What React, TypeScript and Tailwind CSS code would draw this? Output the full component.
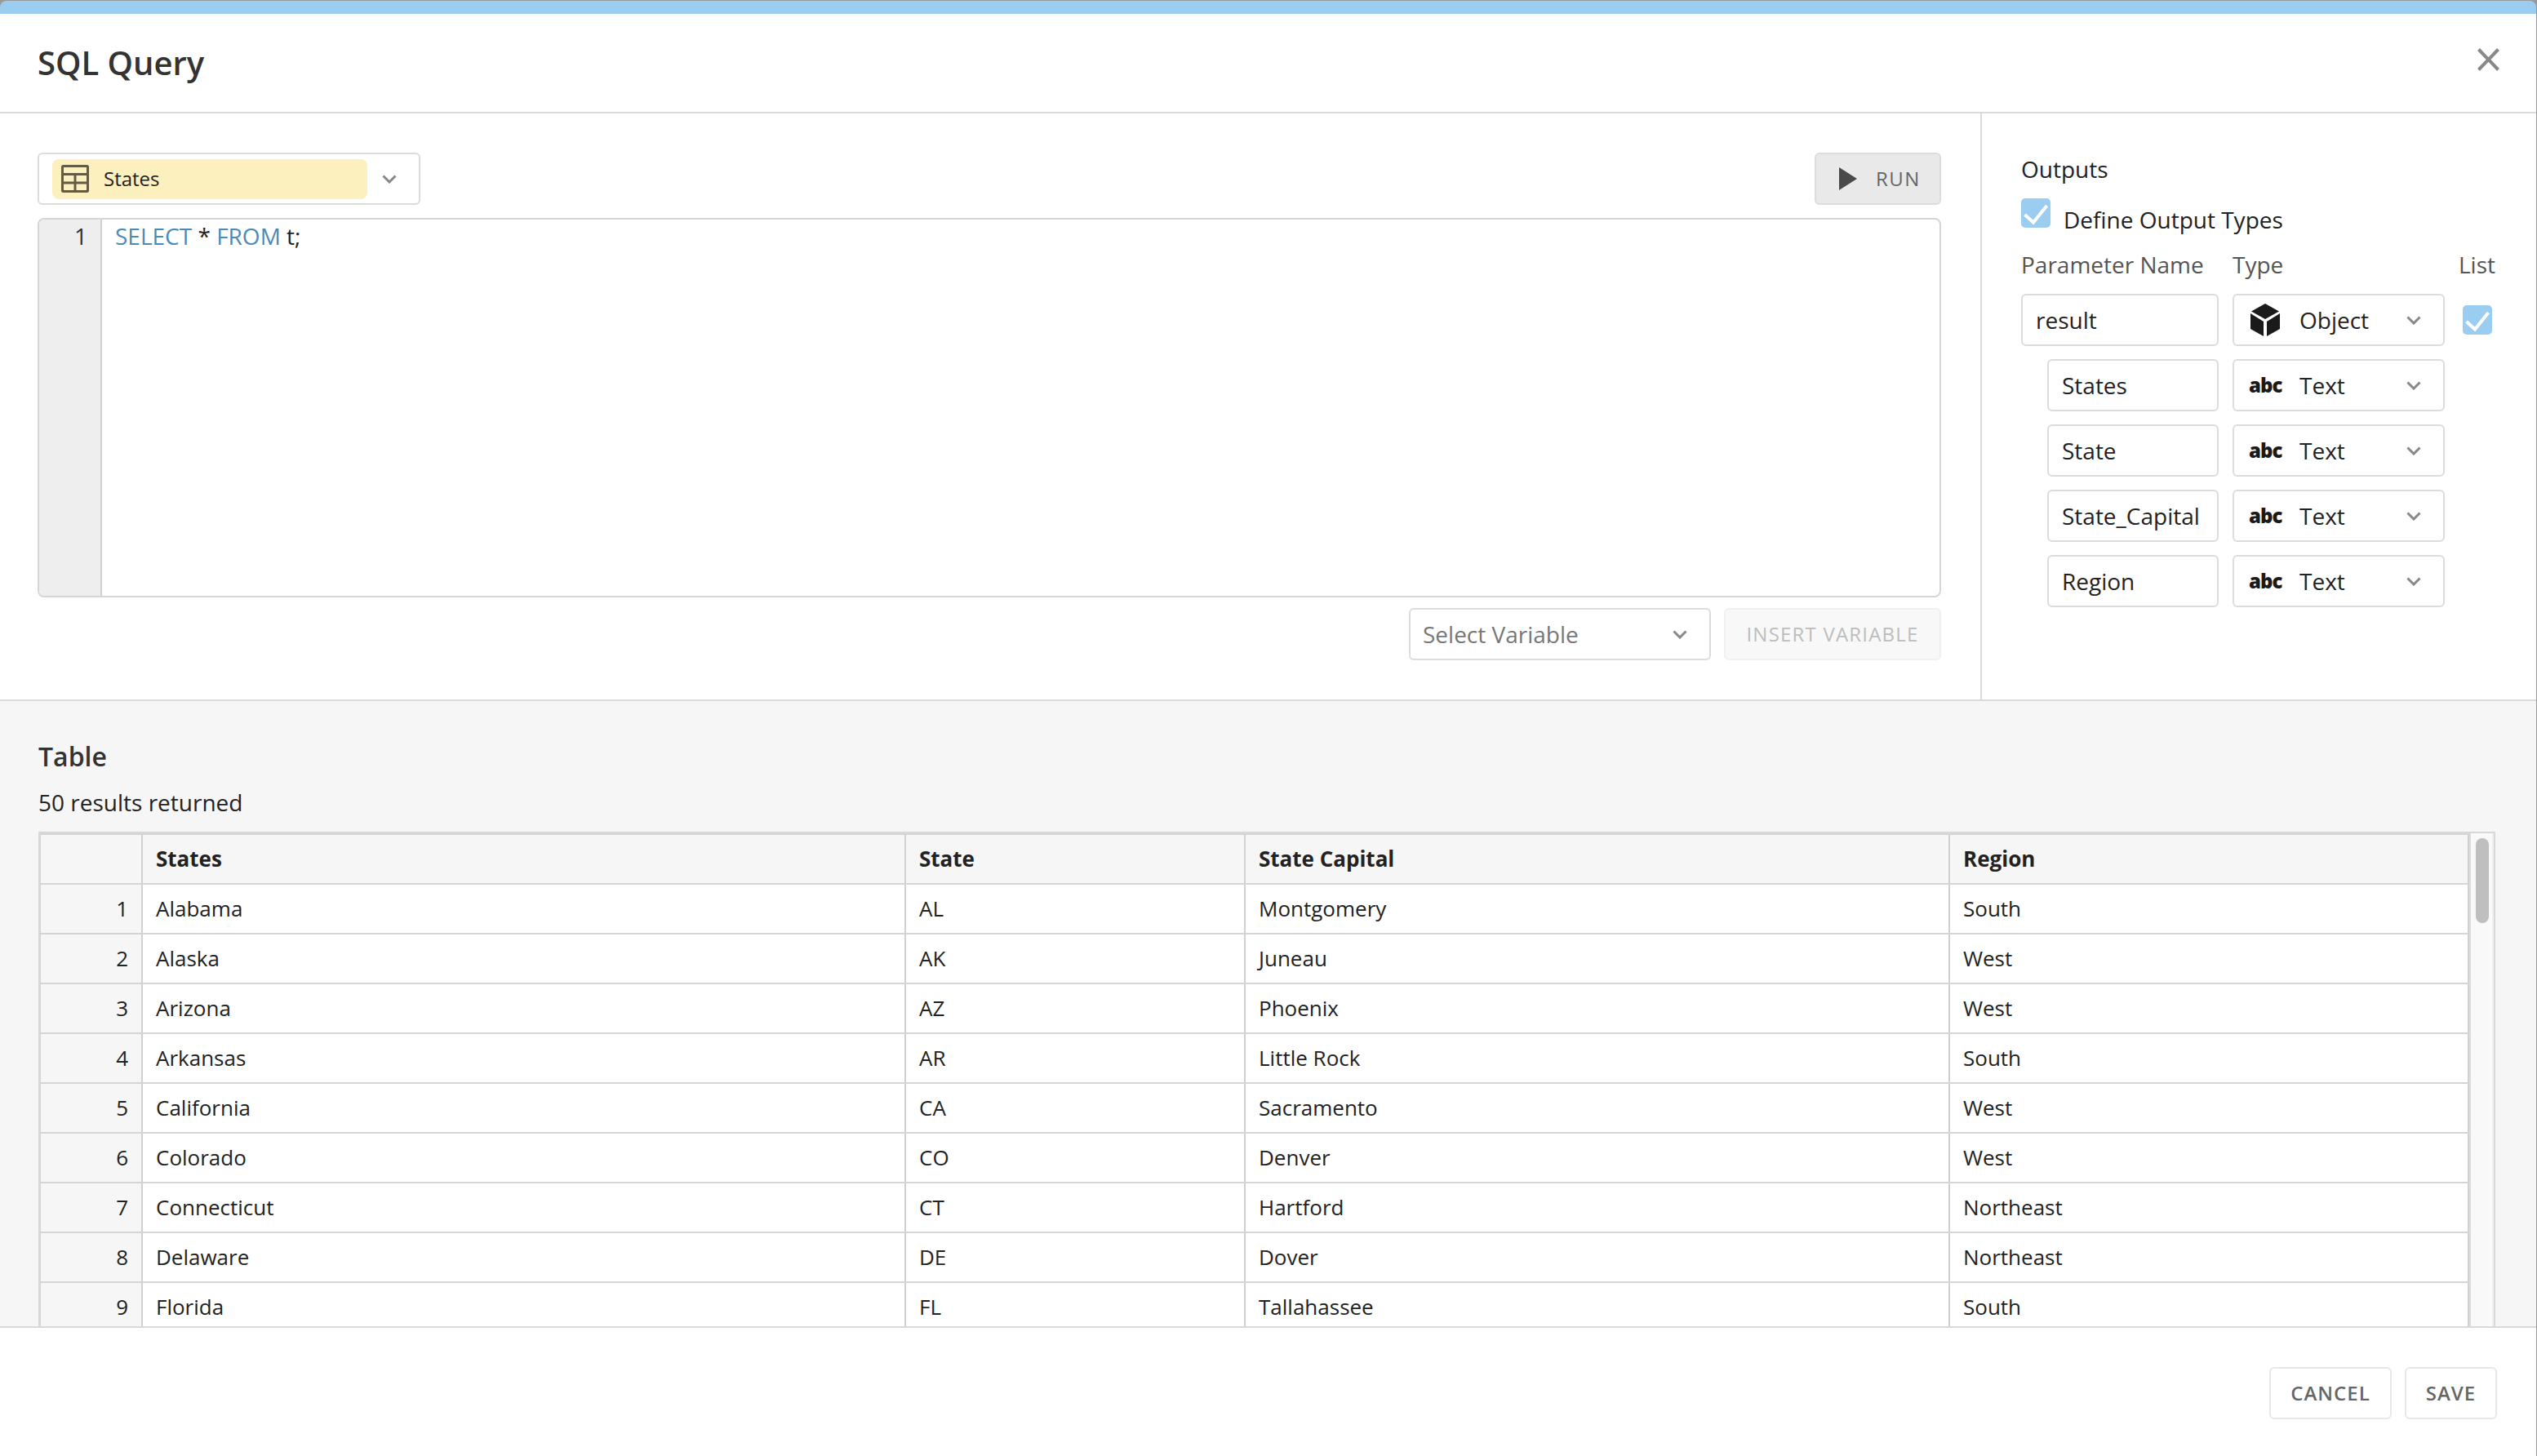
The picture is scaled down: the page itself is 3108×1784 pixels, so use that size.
const outputRows = [
  { name: 'States' },
  { name: 'State' },
  { name: 'State_Capital' },
  { name: 'Region' },
]

const tableRows = [
  ['1', 'Alabama', 'AL', 'Montgomery', 'South'],
  ['2', 'Alaska', 'AK', 'Juneau', 'West'],
  ['3', 'Arizona', 'AZ', 'Phoenix', 'West'],
  ['4', 'Arkansas', 'AR', 'Little Rock', 'South'],
  ['5', 'California', 'CA', 'Sacramento', 'West'],
  ['6', 'Colorado', 'CO', 'Denver', 'West'],
  ['7', 'Connecticut', 'CT', 'Hartford', 'Northeast'],
  ['8', 'Delaware', 'DE', 'Dover', 'Northeast'],
  ['9', 'Florida', 'FL', 'Tallahassee', 'South'],
]

// Small grey chevron used by every select
const Chevron = () => (
  <svg viewBox="0 0 18 11" className="h-[11px] w-[18px] shrink-0" fill="none" stroke="#888888" strokeWidth="3">
    <path d="M1.5 1.5 L9 9 L16.5 1.5" />
  </svg>
)

const TableIcon = () => (
  <svg viewBox="0 0 34 34" className="h-[34px] w-[34px] shrink-0" fill="none" stroke="#645b45" strokeWidth="3">
    <rect x="1.5" y="1.5" width="31" height="31" rx="1" />
    <path d="M1 11.5 H33 M1 22 H33 M17 11.5 V33" />
  </svg>
)

const CubeIcon = () => (
  <svg viewBox="0 0 36 40" className="h-[40px] w-[36px] shrink-0" fill="#1a1a1a">
    <path d="M18 0 L35 9.5 L18 19 L1 9.5 Z" />
    <path d="M0 12 L16 22 V40 L0 31 Z" />
    <path d="M36 12 L20 22 V40 L36 31 Z" />
  </svg>
)

const Checkbox = () => (
  <div className="flex h-[36px] w-[36px] shrink-0 items-center justify-center rounded-[5px] bg-[#9bcdf0]">
    <svg viewBox="0 0 36 36" className="h-[36px] w-[36px]" fill="none" stroke="#ffffff" strokeWidth="4">
      <path d="M4.5 20 L15 29.5 L31.5 9" />
    </svg>
  </div>
)

const TypeSelect = ({ label, icon }: { label: string; icon: 'object' | 'text' }) => (
  <div className="ml-[17px] flex h-[64px] w-[260px] shrink-0 items-center rounded-md border-2 border-[#dcdcdc] pr-[27px]">
    {icon === 'object' ? (
      <div className="ml-[20px] mr-[24px]">
        <CubeIcon />
      </div>
    ) : (
      <span className="ml-[18px] mr-[21px] w-[41px] text-[24px] leading-[36px] font-extrabold tracking-[-1px] text-[#1a1a1a]">abc</span>
    )}
    <span className="flex-1 text-[28px] text-[#222222]">{label}</span>
    <Chevron />
  </div>
)

const NameInput = ({ value, indented }: { value: string; indented?: boolean }) => (
  <input
    readOnly
    value={value}
    className={
      indented
        ? 'ml-[32px] h-[64px] w-[210px] shrink-0 rounded-md border-2 border-[#dcdcdc] pl-[16px] text-[28px] text-[#222222] outline-none'
        : 'h-[64px] w-[242px] shrink-0 rounded-md border-2 border-[#dcdcdc] pl-[16px] text-[28px] text-[#222222] outline-none'
    }
  />
)

const gridCols = 'grid grid-cols-[125px_935px_416px_863px_636px]'

export default function App() {
  return (
    <div className="flex h-[1784px] w-[3108px] flex-col overflow-hidden bg-[#999999] pt-px pr-px font-['Open_Sans',sans-serif] text-[#222222]">
      <div className="flex min-h-0 flex-1 flex-col overflow-hidden rounded-t-lg border-t-[16px] border-[#9bcdf0] bg-white">
        {/* Header */}
        <div className="flex h-[122px] shrink-0 items-center justify-between border-b-2 border-[#d9d9d9] pr-[45px] pl-[46px]">
          <h1 className="text-[40px] font-semibold text-[#333333]">SQL Query</h1>
          <svg viewBox="0 0 27 28" className="mb-[8px] h-[28px] w-[27px]" fill="none" stroke="#888888" strokeWidth="4">
            <path d="M1.5 1.5 L25.5 26.5 M25.5 1.5 L1.5 26.5" />
          </svg>
        </div>

        {/* Editor + outputs */}
        <div className="flex h-[720px] shrink-0 border-b-2 border-[#d9d9d9]">
          <div className="w-[2428px] shrink-0 border-r-2 border-[#d9d9d9] pt-[48px] pr-[48px] pl-[46px]">
            <div className="flex items-center justify-between">
              <div className="flex h-[64px] w-[469px] items-center rounded-md border-2 border-[#dcdcdc] pl-[16px]">
                <div className="flex h-[49px] w-[386px] items-center rounded-lg bg-[#fdf0bf] pl-[11px]">
                  <TableIcon />
                  <span className="ml-[18px] text-[24px] text-[#222222]">States</span>
                </div>
                <div className="ml-[18px]">
                  <Chevron />
                </div>
              </div>
              <button className="flex h-[64px] w-[155px] items-center rounded-md border-2 border-[#dcdcdc] bg-[#e9e9e9] pl-[28px]">
                <svg viewBox="0 0 22 28" className="h-[28px] w-[22px]" fill="#4a4a4a">
                  <path d="M0 0 L22 14 L0 28 Z" />
                </svg>
                <span className="ml-[23px] text-[24px] font-medium tracking-[1.5px] text-[#666666]">RUN</span>
              </button>
            </div>

            <div className="mt-[16px] flex h-[465px] overflow-hidden rounded-lg border-2 border-[#d5d5d5]">
              <div className="w-[77px] shrink-0 border-r-2 border-[#d0d0d0] bg-[#eeeeee] pt-[1px] pr-[16px] text-right text-[28px] leading-[38px] text-[#333333]">
                1
              </div>
              <div className="pt-[1px] pl-[16px] text-[28px] leading-[38px] text-[#222222]">
                <span className="text-[#4a8ab8]">SELECT</span> * <span className="text-[#4a8ab8]">FROM</span> t;
              </div>
            </div>

            <div className="mt-[13px] flex justify-end gap-[16px]">
              <div className="flex h-[64px] w-[370px] items-center justify-between rounded-md border-2 border-[#dcdcdc] pr-[27px] pl-[15px]">
                <span className="text-[28px] text-[#777777]">Select Variable</span>
                <Chevron />
              </div>
              <button className="h-[64px] w-[266px] rounded-md border-2 border-[#f0f0f0] bg-[#f8f8f8] text-[24px] font-medium tracking-[1.2px] text-[#bdbdbd]">
                INSERT VARIABLE
              </button>
            </div>
          </div>

          <div className="flex-1 pt-[49px] pl-[48px] text-[28px] leading-[38px]">
            <div>Outputs</div>
            <div className="mt-[17px] flex items-start">
              <Checkbox />
              <span className="mt-[7px] ml-[16px]">Define Output Types</span>
            </div>
            <div className="mt-[17px] flex text-[#555555]">
              <span className="w-[259px]">Parameter Name</span>
              <span className="w-[277px]">Type</span>
              <span>List</span>
            </div>
            <div className="mt-[17px] flex items-center">
              <NameInput value="result" />
              <TypeSelect label="Object" icon="object" />
              <div className="ml-[22px]">
                <Checkbox />
              </div>
            </div>
            {outputRows.map((row) => (
              <div key={row.name} className="mt-[16px] flex items-center">
                <NameInput value={row.name} indented />
                <TypeSelect label="Text" icon="text" />
              </div>
            ))}
          </div>
        </div>

        {/* Results table */}
        <div className="flex min-h-0 flex-1 flex-col border-b-2 border-[#d9d9d9] bg-[#f6f6f6] pt-[46px]">
          <h2 className="pl-[47px] text-[32px] leading-[44px] font-semibold text-[#333333]">Table</h2>
          <p className="mt-[15px] pl-[47px] text-[28px] leading-[38px] text-[#222222]">50 results returned</p>
          <div className="mt-[17px] ml-[47px] flex min-h-0 w-[3010px] flex-1 border-x-2 border-t-2 border-[#d8d8d8]">
            <div className="min-w-0 flex-1 overflow-hidden border-t-2 border-l border-[#d5d5d5] text-[26px] leading-[59px] text-[#222222]">
              <div className={`${gridCols} border-b-2 border-[#d5d5d5] font-bold`}>
                <div className="border-r-2 border-[#d0d0d0]" />
                <div className="border-r-2 border-[#d0d0d0] pl-[16px]">States</div>
                <div className="border-r-2 border-[#d0d0d0] pl-[16px]">State</div>
                <div className="border-r-2 border-[#d0d0d0] pl-[16px]">State Capital</div>
                <div className="border-r-2 border-[#d0d0d0] pl-[16px]">Region</div>
              </div>
              {tableRows.map((row) => (
                <div key={row[0]} className={`${gridCols} border-b-2 border-[#d5d5d5]`}>
                  <div className="border-r-2 border-[#d0d0d0] bg-[#f6f6f6] pr-[16px] text-right">{row[0]}</div>
                  <div className="border-r-2 border-[#d0d0d0] bg-white pl-[16px]">{row[1]}</div>
                  <div className="border-r-2 border-[#d0d0d0] bg-white pl-[16px]">{row[2]}</div>
                  <div className="border-r-2 border-[#d0d0d0] bg-white pl-[16px]">{row[3]}</div>
                  <div className="border-r-2 border-[#d0d0d0] bg-white pl-[16px]">{row[4]}</div>
                </div>
              ))}
            </div>
            {/* Scrollbar */}
            <div className="w-[30px] shrink-0 border-r-2 border-l-2 border-r-[#f0f0f0] border-l-[#dddddd] bg-[#f9f9f9] pt-[6px] pl-[6px]">
              <div className="h-[104px] w-[16px] rounded-full bg-[#bfbfbf]" />
            </div>
          </div>
        </div>

        {/* Footer */}
        <div className="flex h-[157px] shrink-0 justify-end gap-[16px] pt-[48px] pr-[48px]">
          <button className="h-[64px] w-[150px] rounded-md border-2 border-[#e8e8e8] text-[24px] font-semibold tracking-[1px] text-[#666666]">
            CANCEL
          </button>
          <button className="h-[64px] w-[113px] rounded-md border-2 border-[#e8e8e8] text-[24px] font-semibold tracking-[1px] text-[#666666]">
            SAVE
          </button>
        </div>
      </div>
    </div>
  )
}
